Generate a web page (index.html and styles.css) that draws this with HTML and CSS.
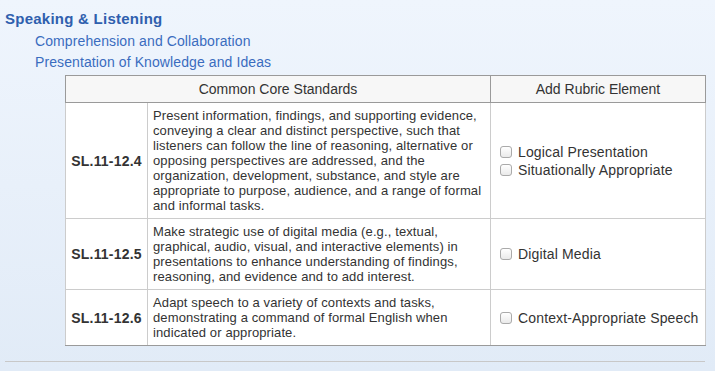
FILE: index.html
```html
<!DOCTYPE html>
<html>
<head>
<meta charset="utf-8">
<link rel="stylesheet" href="styles.css">
</head>
<body>
<div class="page">
  <h2 class="heading">Speaking &amp; Listening</h2>
  <ul class="subs">
    <li><a href="#">Comprehension and Collaboration</a></li>
    <li><a href="#">Presentation of Knowledge and Ideas</a></li>
  </ul>
  <table class="std">
    <colgroup>
      <col class="c1"><col class="c2"><col class="c3">
    </colgroup>
    <thead>
      <tr><th colspan="2" class="h-std">Common Core Standards</th><th class="h-add">Add Rubric Element</th></tr>
    </thead>
    <tbody>
      <tr>
        <td class="code">SL.11-12.4</td>
        <td class="desc">Present information, findings, and supporting evidence, conveying a clear and distinct perspective, such that listeners can follow the line of reasoning, alternative or opposing perspectives are addressed, and the organization, development, substance, and style are appropriate to purpose, audience, and a range of formal and informal tasks.</td>
        <td class="add">
          <label class="opt"><span class="box"></span>Logical Presentation</label>
          <label class="opt"><span class="box"></span>Situationally Appropriate</label>
        </td>
      </tr>
      <tr>
        <td class="code">SL.11-12.5</td>
        <td class="desc">Make strategic use of digital media (e.g., textual, graphical, audio, visual, and interactive elements) in presentations to enhance understanding of findings, reasoning, and evidence and to add interest.</td>
        <td class="add">
          <label class="opt"><span class="box"></span>Digital Media</label>
        </td>
      </tr>
      <tr>
        <td class="code">SL.11-12.6</td>
        <td class="desc">Adapt speech to a variety of contexts and tasks, demonstrating a command of formal English when indicated or appropriate.</td>
        <td class="add">
          <label class="opt"><span class="box"></span>Context-Appropriate Speech</label>
        </td>
      </tr>
    </tbody>
  </table>
  <div class="rule"></div>
</div>
</body>
</html>
```

FILE: styles.css
```css
html, body {
  margin: 0;
  padding: 0;
}
body {
  width: 715px;
  height: 371px;
  overflow: hidden;
  background: linear-gradient(#eff5fd, #e1ebf7);
  font-family: "Liberation Sans", Arial, sans-serif;
  color: #333;
}
.page {
  padding: 8px 0 0 5px;
}
.heading {
  margin: 0;
  font-size: 15px;
  letter-spacing: 0.25px;
  line-height: 21px;
  font-weight: bold;
  color: #2f5fae;
}
.subs {
  list-style: none;
  margin: 2px 0 0 0;
  padding: 0 0 0 30px;
}
.subs li {
  font-size: 14px;
  letter-spacing: 0.1px;
  line-height: 21px;
}
.subs a {
  color: #3a6cbf;
  text-decoration: none;
}
.std {
  margin: 2px 0 0 60px;
  width: 640px;
  table-layout: fixed;
  border-collapse: collapse;
  background: #fff;
  border: 1px solid #9a9a9a;
}
.c1 { width: 82px; }
.c2 { width: 343px; }
.c3 { width: 215px; }
.std th {
  background: #f7f7f7;
  font-weight: normal;
  font-size: 14px;
  color: #333;
  height: 26px;
  padding: 0;
  border: 1px solid #9a9a9a;
  text-align: center;
}
.std td {
  border: 1px solid #cccccc;
  padding: 5px;
  vertical-align: middle;
}
.std tr:last-child td {
  border-bottom-color: #9a9a9a;
}
.code {
  font-weight: bold;
  font-size: 14px;
  letter-spacing: 0.2px;
  text-align: center;
  color: #333;
  padding: 5px 0 !important;
}
.desc {
  font-size: 13px;
  letter-spacing: 0.12px;
  line-height: 15px;
}
.add {
  padding-left: 9px !important;
  padding-right: 0 !important;
  font-size: 14px;
  letter-spacing: 0.15px;
  color: #333;
  white-space: nowrap;
}
.opt {
  display: flex;
  align-items: center;
  line-height: 18px;
}
.box {
  width: 10px;
  height: 10px;
  border: 1px solid #aaa;
  border-radius: 3px;
  background: linear-gradient(#fff, #eaeaea);
  margin-right: 6px;
  flex: none;
}
.rule {
  margin-top: 15px;
  width: 700px;
  border-top: 1px solid #c8c8c8;
}
```
